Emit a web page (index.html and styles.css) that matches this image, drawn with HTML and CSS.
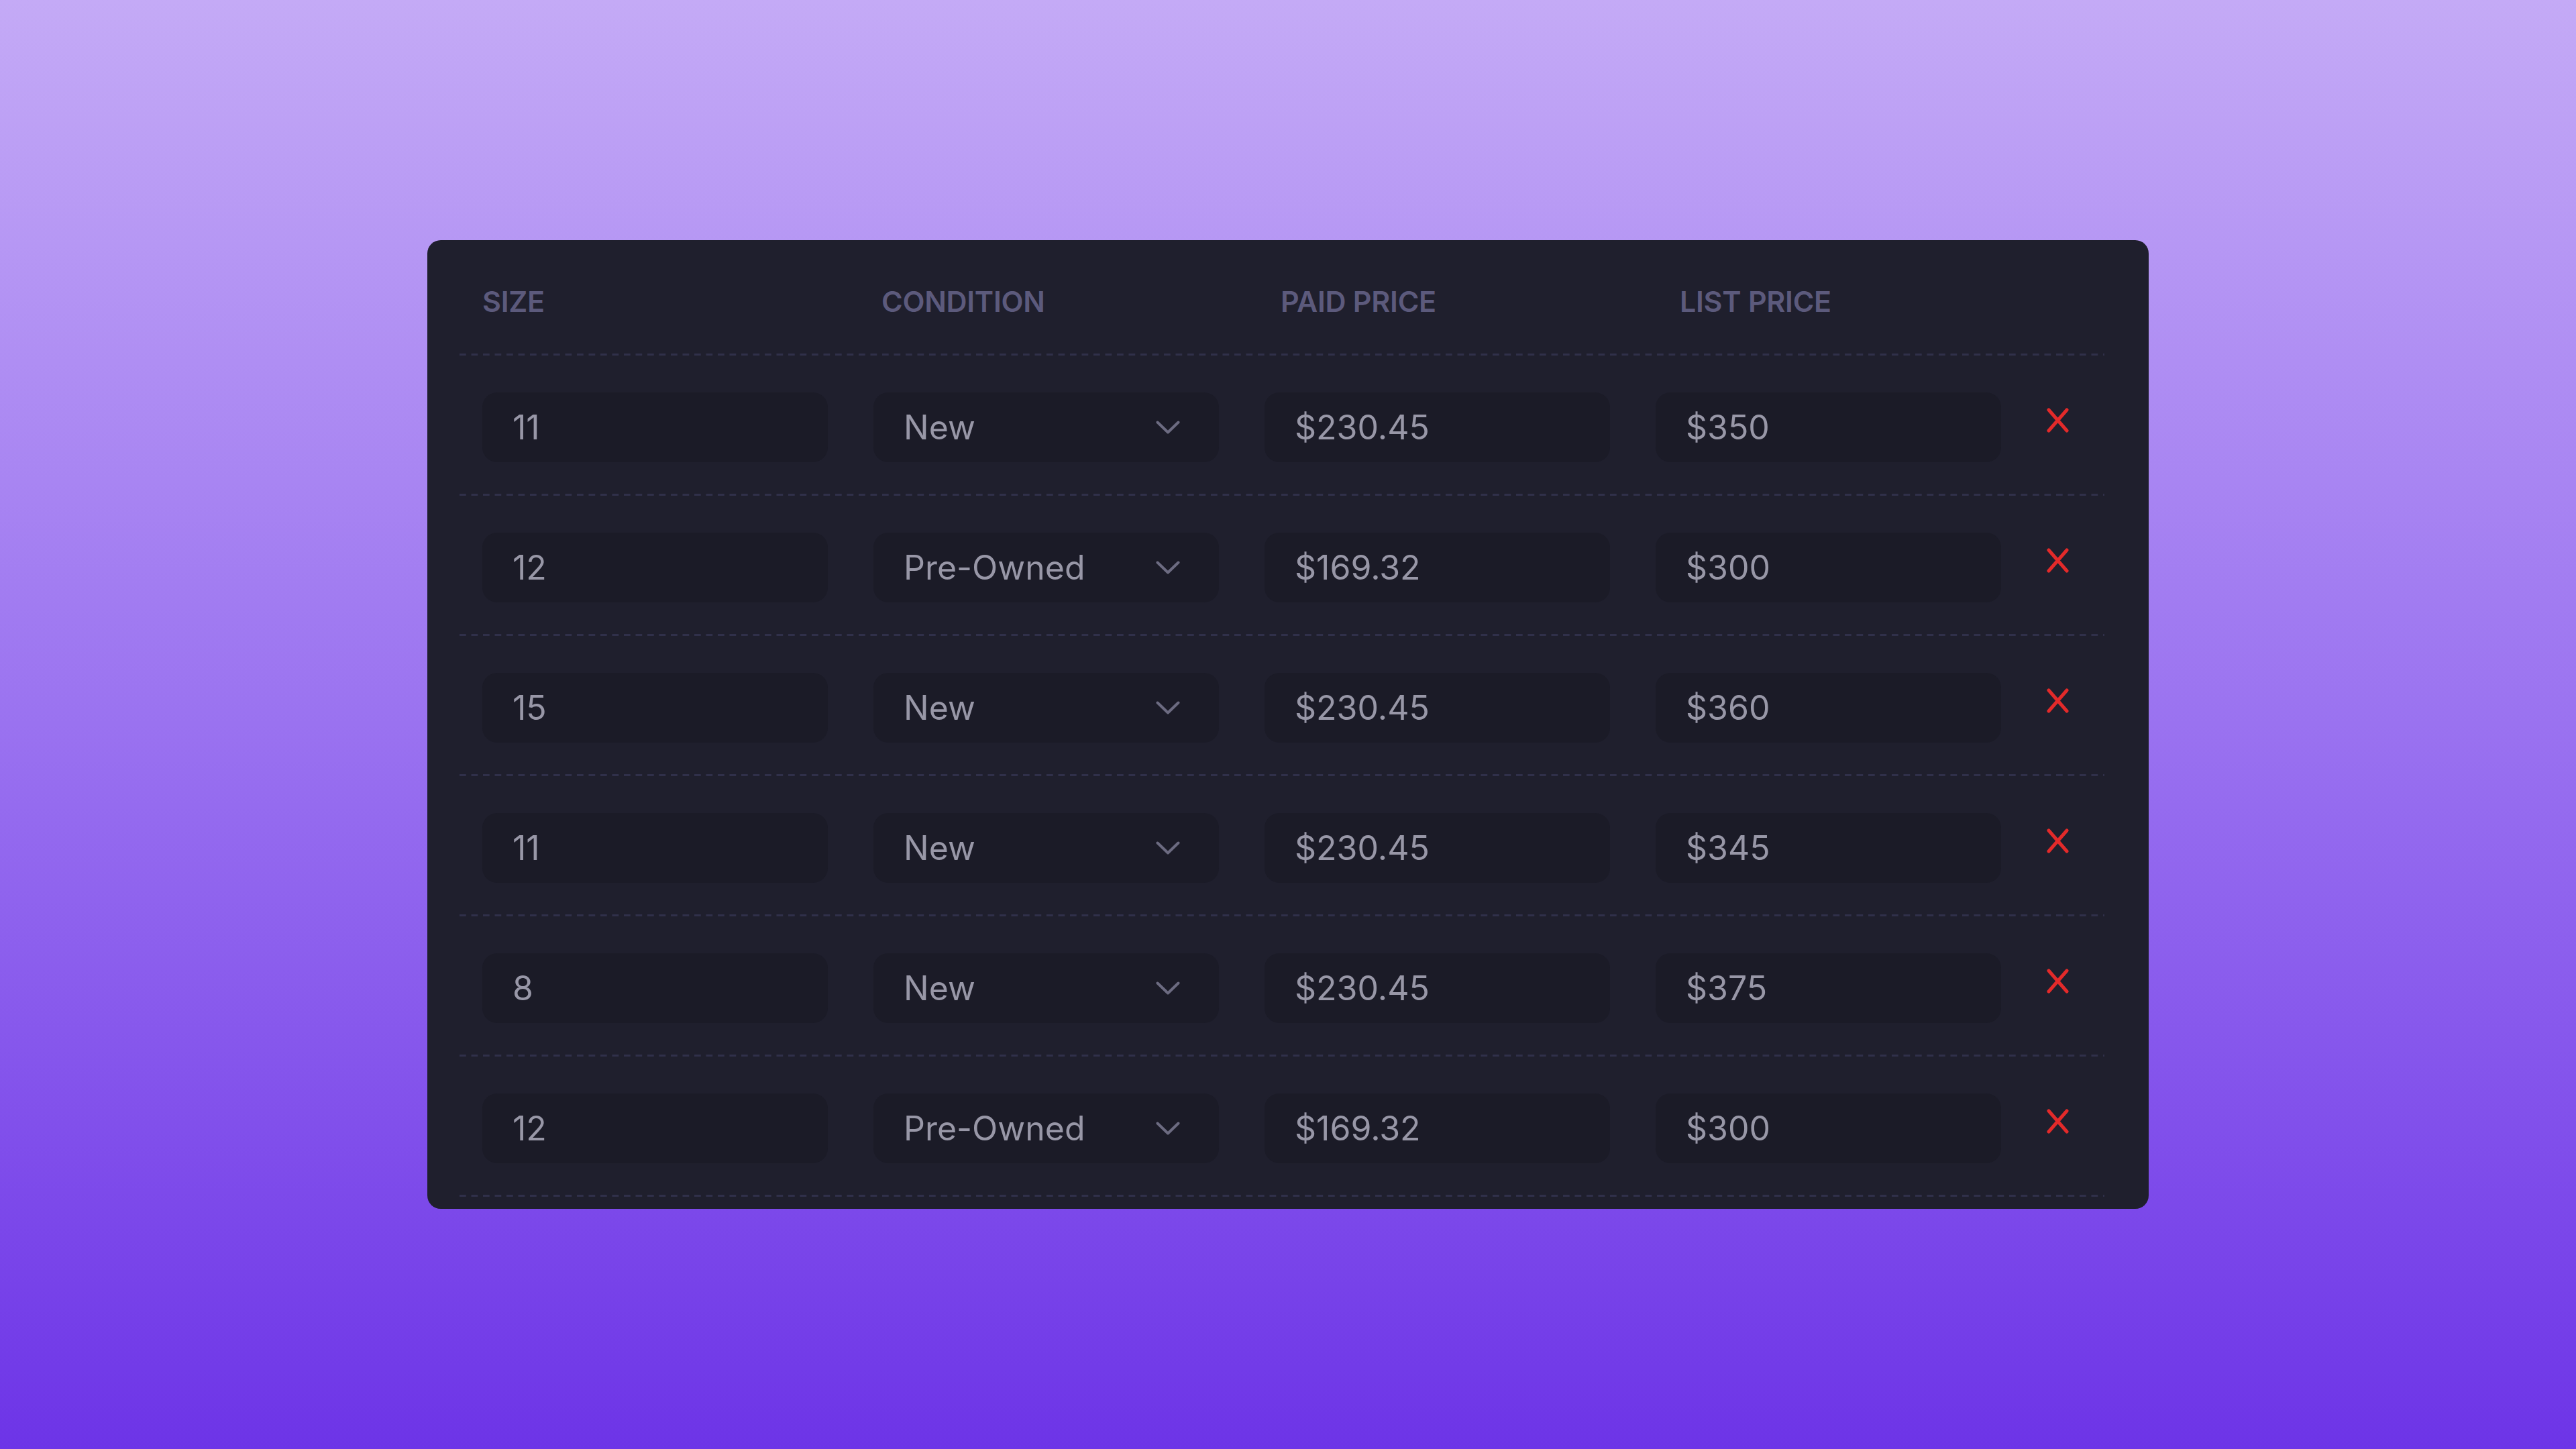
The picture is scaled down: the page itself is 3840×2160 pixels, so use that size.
FILE: index.html
```html
<!DOCTYPE html>
<html lang="en">
<head>
<meta charset="utf-8">
<title>Inventory</title>
<link rel="stylesheet" href="styles.css">
</head>
<body>
<main class="stage">
  <section class="card">
    <div class="head">
      <div class="th">SIZE</div>
      <div class="th">CONDITION</div>
      <div class="th">PAID PRICE</div>
      <div class="th">LIST PRICE</div>
    </div>

    <div class="row">
      <div class="field">11</div>
      <div class="field select">New<svg class="chev" viewBox="0 0 36 20"><path d="M2.5 2.5 L18 17.5 L33.5 2.5"/></svg></div>
      <div class="field">$230.45</div>
      <div class="field">$350</div>
      <svg class="del" viewBox="0 0 33 37"><path d="M3 3 L30 34 M30 3 L3 34"/></svg>
    </div>

    <div class="row">
      <div class="field">12</div>
      <div class="field select">Pre-Owned<svg class="chev" viewBox="0 0 36 20"><path d="M2.5 2.5 L18 17.5 L33.5 2.5"/></svg></div>
      <div class="field">$169.32</div>
      <div class="field">$300</div>
      <svg class="del" viewBox="0 0 33 37"><path d="M3 3 L30 34 M30 3 L3 34"/></svg>
    </div>

    <div class="row">
      <div class="field">15</div>
      <div class="field select">New<svg class="chev" viewBox="0 0 36 20"><path d="M2.5 2.5 L18 17.5 L33.5 2.5"/></svg></div>
      <div class="field">$230.45</div>
      <div class="field">$360</div>
      <svg class="del" viewBox="0 0 33 37"><path d="M3 3 L30 34 M30 3 L3 34"/></svg>
    </div>

    <div class="row">
      <div class="field">11</div>
      <div class="field select">New<svg class="chev" viewBox="0 0 36 20"><path d="M2.5 2.5 L18 17.5 L33.5 2.5"/></svg></div>
      <div class="field">$230.45</div>
      <div class="field">$345</div>
      <svg class="del" viewBox="0 0 33 37"><path d="M3 3 L30 34 M30 3 L3 34"/></svg>
    </div>

    <div class="row">
      <div class="field">8</div>
      <div class="field select">New<svg class="chev" viewBox="0 0 36 20"><path d="M2.5 2.5 L18 17.5 L33.5 2.5"/></svg></div>
      <div class="field">$230.45</div>
      <div class="field">$375</div>
      <svg class="del" viewBox="0 0 33 37"><path d="M3 3 L30 34 M30 3 L3 34"/></svg>
    </div>

    <div class="row">
      <div class="field">12</div>
      <div class="field select">Pre-Owned<svg class="chev" viewBox="0 0 36 20"><path d="M2.5 2.5 L18 17.5 L33.5 2.5"/></svg></div>
      <div class="field">$169.32</div>
      <div class="field">$300</div>
      <svg class="del" viewBox="0 0 33 37"><path d="M3 3 L30 34 M30 3 L3 34"/></svg>
    </div>
  </section>
</main>
</body>
</html>
```

FILE: styles.css
```css
* { box-sizing: border-box; }

html, body {
  margin: 0;
  padding: 0;
}

body {
  width: 3840px;
  height: 2160px;
  font-family: Inter, "Noto Sans", "Liberation Sans", sans-serif;
  background: linear-gradient(to bottom, #c4aaf6 0%, #9a72f0 50%, #6d34e7 100%);
}

.stage {
  width: 3840px;
  height: 2160px;
  display: flex;
  align-items: center;
  justify-content: center;
}

.card {
  width: 2566px;
  height: 1444px;
  background: #1f1f2d;
  border-radius: 20px;
  padding: 0 66px 18px 48px;
  display: flex;
  flex-direction: column;
}

.head,
.row {
  background-image: linear-gradient(to right, #30304a 10px, transparent 10px);
  background-size: 17.5px 3px;
  background-repeat: repeat-x;
  background-position: left bottom;
}

.head {
  height: 172px;
  padding: 65px 0 0 34px;
  display: grid;
  grid-template-columns: 595px 595px 595px 595px;
}

.th {
  font-size: 43px;
  font-weight: 600;
  color: #5c5a7c;
  line-height: 52px;
  letter-spacing: -0.3px;
}

.row {
  height: 209px;
  padding: 55px 0 50px 34px;
  display: grid;
  grid-template-columns: 515px 515px 515px 515px 33px;
  column-gap: 68px;
  align-items: start;
}

.field {
  height: 104px;
  background: #1b1b27;
  border-radius: 22px;
  padding-left: 45px;
  padding-right: 58px;
  display: flex;
  align-items: center;
  justify-content: space-between;
  font-size: 50px;
  font-weight: 400;
  color: #9897a7;
  letter-spacing: 0;
}

.chev {
  width: 36px;
  height: 20px;
  fill: none;
  stroke: #6c6b81;
  stroke-width: 4;
  stroke-linecap: round;
  stroke-linejoin: round;
}

.del {
  width: 33px;
  height: 37px;
  margin-top: 23px;
  fill: none;
  stroke: #e32a2a;
  stroke-width: 5;
  stroke-linecap: round;
}
```
